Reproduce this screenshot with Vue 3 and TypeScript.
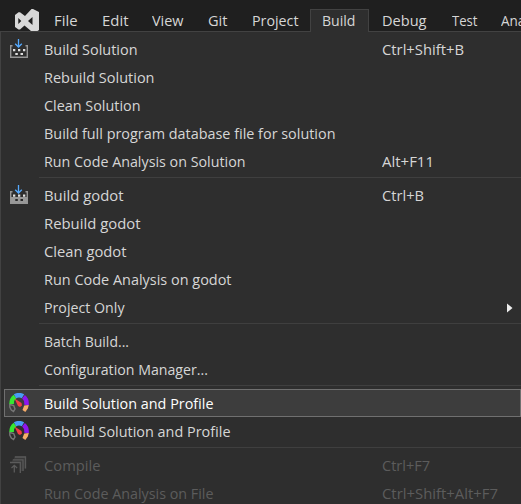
<script setup lang="ts">
interface MenuTab {
  label: string
  slot: number
  width: number
  open?: boolean
}
interface MenuItem {
  label: string
  width: number
  icon?: 'solution' | 'project' | 'gauge' | 'compile'
  keys?: string
  keysWidth?: number
  submenu?: boolean
  selected?: boolean
  disabled?: boolean
}

const tabs: MenuTab[] = [
  { label: 'File', slot: 48, width: 24 },
  { label: 'Edit', slot: 50, width: 27 },
  { label: 'View', slot: 56, width: 32 },
  { label: 'Git', slot: 44, width: 20 },
  { label: 'Project', slot: 73, width: 47 },
  { label: 'Build', slot: 59, width: 34, open: true },
  { label: 'Debug', slot: 70, width: 45 },
  { label: 'Test', slot: 49, width: 26 },
  { label: 'Analyze', slot: 72, width: 49 },
]

const groups: MenuItem[][] = [
  [
    { label: 'Build Solution', width: 94, icon: 'solution', keys: 'Ctrl+Shift+B', keysWidth: 82.5 },
    { label: 'Rebuild Solution', width: 111 },
    { label: 'Clean Solution', width: 97 },
    { label: 'Build full program database file for solution', width: 292 },
    { label: 'Run Code Analysis on Solution', width: 202, keys: 'Alt+F11', keysWidth: 52.5 },
  ],
  [
    { label: 'Build godot', width: 80, icon: 'project', keys: 'Ctrl+B', keysWidth: 42.5 },
    { label: 'Rebuild godot', width: 97 },
    { label: 'Clean godot', width: 83 },
    { label: 'Run Code Analysis on godot', width: 188 },
    { label: 'Project Only', width: 81, submenu: true },
  ],
  [
    { label: 'Batch Build...', width: 85.5 },
    { label: 'Configuration Manager...', width: 164.5 },
  ],
  [
    { label: 'Build Solution and Profile', width: 170, icon: 'gauge', selected: true },
    { label: 'Rebuild Solution and Profile', width: 187, icon: 'gauge' },
  ],
  [
    { label: 'Compile', width: 57, icon: 'compile', keys: 'Ctrl+F7', keysWidth: 48.5, disabled: true },
    { label: 'Run Code Analysis on File', width: 170, keys: 'Ctrl+Shift+Alt+F7', keysWidth: 116.5, disabled: true },
  ],
]

const vFit = {
  mounted(el: HTMLElement, binding: { value: number | undefined }) {
    if (!binding.value) return
    const natural = el.getBoundingClientRect().width
    el.style.transform = `scaleX(${(binding.value - 0.5) / natural})`
  },
}
</script>

<template>
  <div class="window">
    <nav class="menubar">
      <svg class="logo" width="24" height="22" viewBox="0 0 24 22">
        <path fill="#d8d8d8" fill-rule="evenodd" d="M0 6 3.500 3.300H5L10 7 16.500 0H18L24 3V21L22.500 22H16L9.500 16.500 5 20.500H3.500L0 18ZM3.300 9V15L6.300 12ZM17.500 8 13 12 17.500 16Z" />
      </svg>
      <div v-for="tab in tabs" :key="tab.label" class="tab" :class="{ open: tab.open }" :style="{ width: tab.slot + 'px' }">
        <span v-fit="tab.width">{{ tab.label }}</span>
      </div>
    </nav>
    <div class="dropdown">
      <div v-for="(group, g) in groups" :key="g" class="group">
        <div v-for="item in group" :key="item.label" class="item" :class="{ selected: item.selected, disabled: item.disabled }">
          <div class="icon">
            <svg v-if="item.icon === 'solution' || item.icon === 'project'" width="20" height="20" viewBox="0 0 20 20">
              <path v-if="item.icon === 'project'" fill="#999" d="M2 12h16v6H2z" />
              <path fill="none" stroke="#969696" stroke-width="1.400" d="M3.500 6.700H1.700V18.300H18.300V6.700H16.500" />
              <g v-if="item.icon === 'solution'" fill="#dedede">
                <path d="M4 10h2.300v2.300H4zM9 10h2.300v2.300H9zM14 10h2.300v2.300h-2.300zM6.300 14h2.500v2H6.300zM11.500 14H14v2h-2.500z" />
              </g>
              <template v-else>
                <path fill="#dedede" d="M4 9.500h2.300v2.300H4zM9 9.500h2.300v2.300H9zM14 9.500h2.300v2.300h-2.300z" />
                <path fill="#292929" d="M6.300 14h2.500v2H6.300zM11.500 14H14v2h-2.500z" />
              </template>
              <path fill="none" stroke="#55aaff" stroke-width="1.300" d="M9.500 0V8M6.200 4.800 9.500 8 12.800 4.800" />
            </svg>
            <svg v-else-if="item.icon === 'gauge'" width="20" height="20" viewBox="0 0 20 20">
              <g fill="none" stroke-width="4.600">
                <path stroke="#777" stroke-width="1.400" d="M.8 11.500 4.700 12.500 6 16 4.500 18.500 2.300 17 .8 14Z" />
                <path stroke="#35e831" d="M2.600 11Q2.500 6 6 3.500" />
                <path stroke="#4a9cf5" d="M6 3.300Q10 1 14 3.300" />
                <path stroke="#8d16ef" d="M14.500 3.800Q18 6.500 17.500 12" />
              </g>
              <path fill="#f5ad69" d="M15.200 12.500 19.800 12 18.800 15.500 16.300 19 13.500 17Z" />
              <path fill="#f43c42" d="M5.500 5.500 12.500 10 13 12.500 11 14 9 13Z" />
            </svg>
            <svg v-else-if="item.icon === 'compile'" width="20" height="20" viewBox="0 0 20 20">
              <g fill="none" stroke="#5b5b5b" stroke-width="1.300">
                <path d="M6 2H16.500V13.500M4 4.800H14V16M1 7.500H11.300V18" />
                <path d="M5.300 17.500V10.500M2.500 13 5.300 10.300 8.100 13" />
              </g>
              <path fill="#555" opacity=".3" d="M5 1.500h12v12h-2v2.500h-3V7H3V4.500h2z" />
            </svg>
          </div>
          <div class="label"><span v-fit="item.width">{{ item.label }}</span></div>
          <div class="keys"><span v-if="item.keys" v-fit="item.keysWidth">{{ item.keys }}</span></div>
          <svg v-if="item.submenu" class="arrow" width="6" height="10" viewBox="0 0 6 10">
            <path fill="#ededed" d="M0 .5 5.500 5 0 9.500Z" />
          </svg>
        </div>
      </div>
    </div>
  </div>
</template>

<style>
body {
  background: #1f1f1f;
  overflow: hidden;
}
</style>

<style scoped>
.window {
  width: 521px;
  height: 504px;
  overflow: hidden;
  background: #1f1f1f;
  color: #d6d6d6;
  font: 15px/20px "Open Sans", "Noto Sans", sans-serif;
  white-space: nowrap;
}
.window * {
  box-sizing: border-box;
}
.window span {
  display: inline-block;
  transform-origin: left center;
}
.menubar {
  display: flex;
  align-items: flex-end;
  height: 32px;
  padding-left: 15px;
  border-bottom: 1px solid #424242;
}
.logo {
  flex: none;
  align-self: flex-end;
}
.tab {
  flex: none;
  height: 22px;
  padding-left: 14px;
  line-height: 20px;
  border: 1px solid transparent;
  border-bottom: 0;
}
.tab.open {
  height: 23px;
  margin: 0 -2px -1px 0;
  padding-left: 11px;
  background: #2e2e2e;
  border-color: #424242;
}
.dropdown {
  height: 472px;
  padding-top: 3px;
  background: #2e2e2e;
  border-left: 1px solid #424242;
}
.group + .group {
  padding-top: 6px;
  background: linear-gradient(#3f3f3f, #3f3f3f) 38px 2px / 100% 1px no-repeat;
}
.item {
  display: flex;
  align-items: center;
  height: 28px;
  margin-left: 3px;
  padding-left: 4px;
  border: 1px solid transparent;
}
.item.selected {
  color: #fff;
  background: #3d3d3d;
  border-color: #707070;
}
.item.disabled {
  color: #5c5c5c;
}
.icon {
  flex: none;
  width: 20px;
  height: 20px;
}
.icon svg,
.arrow {
  display: block;
}
.label {
  flex: none;
  width: 338px;
  padding-left: 14.6px;
}
.keys {
  flex: none;
  width: 125px;
  margin-left: 15px;
}
.arrow {
  flex: none;
  margin-top: 1px;
}
</style>
